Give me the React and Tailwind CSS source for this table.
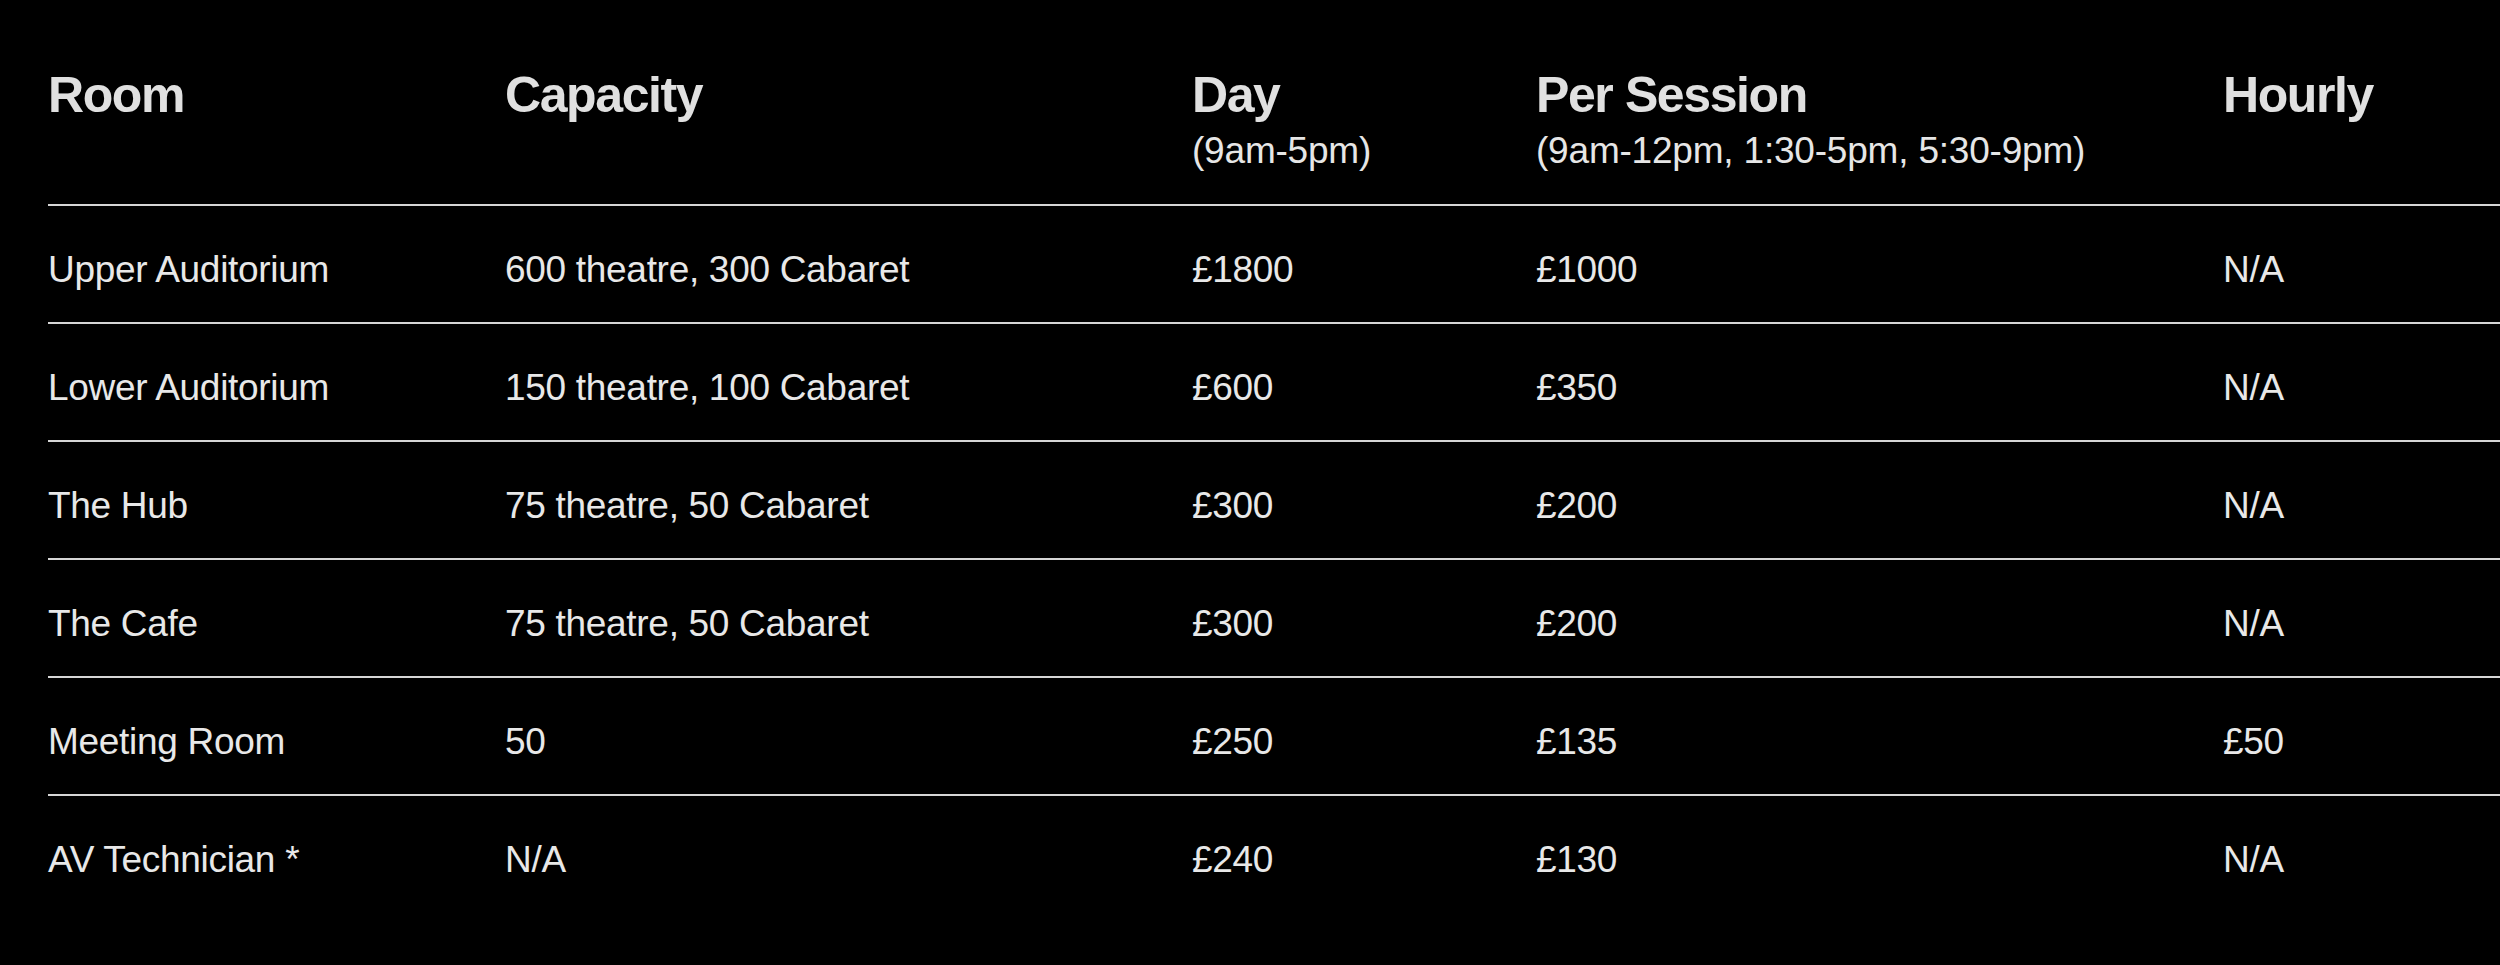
const rows = [
  { room: 'Upper Auditorium', capacity: '600 theatre, 300 Cabaret', day: '£1800', session: '£1000', hourly: 'N/A' },
  { room: 'Lower Auditorium', capacity: '150 theatre, 100 Cabaret', day: '£600', session: '£350', hourly: 'N/A' },
  { room: 'The Hub', capacity: '75 theatre, 50 Cabaret', day: '£300', session: '£200', hourly: 'N/A' },
  { room: 'The Cafe', capacity: '75 theatre, 50 Cabaret', day: '£300', session: '£200', hourly: 'N/A' },
  { room: 'Meeting Room', capacity: '50', day: '£250', session: '£135', hourly: '£50' },
  { room: 'AV Technician *', capacity: 'N/A', day: '£240', session: '£130', hourly: 'N/A' },
];

const cols = 'grid grid-cols-[457px_687px_344px_687px_1fr]';

const Head = ({ title, sub }) => (
  <div>
    <div className="text-[50px] leading-[60px] font-bold tracking-[-1.4px] text-[#e0e0e0]">{title}</div>
    {sub && <div className="mt-[4px] text-[37px] leading-[44px] tracking-[-0.2px] text-[#e6e6e6]">{sub}</div>}
  </div>
);

export default function App() {
  return (
    <div
      className="min-h-screen w-full bg-black pl-[48px] text-[#e8e8e8]"
      style={{ fontFamily: '"Liberation Sans", Arial, Helvetica, sans-serif' }}
    >
      <div className={`${cols} pt-[65px] pb-[31px] border-b-2 border-[#d6d6d6]`}>
        <Head title="Room" />
        <Head title="Capacity" />
        <Head title="Day" sub="(9am-5pm)" />
        <Head title="Per Session" sub="(9am-12pm, 1:30-5pm, 5:30-9pm)" />
        <Head title="Hourly" />
      </div>

      {rows.map((r, i) => (
        <div
          key={r.room}
          className={`${cols} pt-[42px] pb-[30px] text-[37px] leading-[44px] tracking-[-0.3px] ${
            i < rows.length - 1 ? 'border-b-2 border-[#d6d6d6]' : ''
          }`}
        >
          <div>{r.room}</div>
          <div>{r.capacity}</div>
          <div>{r.day}</div>
          <div>{r.session}</div>
          <div>{r.hourly}</div>
        </div>
      ))}
    </div>
  );
}
